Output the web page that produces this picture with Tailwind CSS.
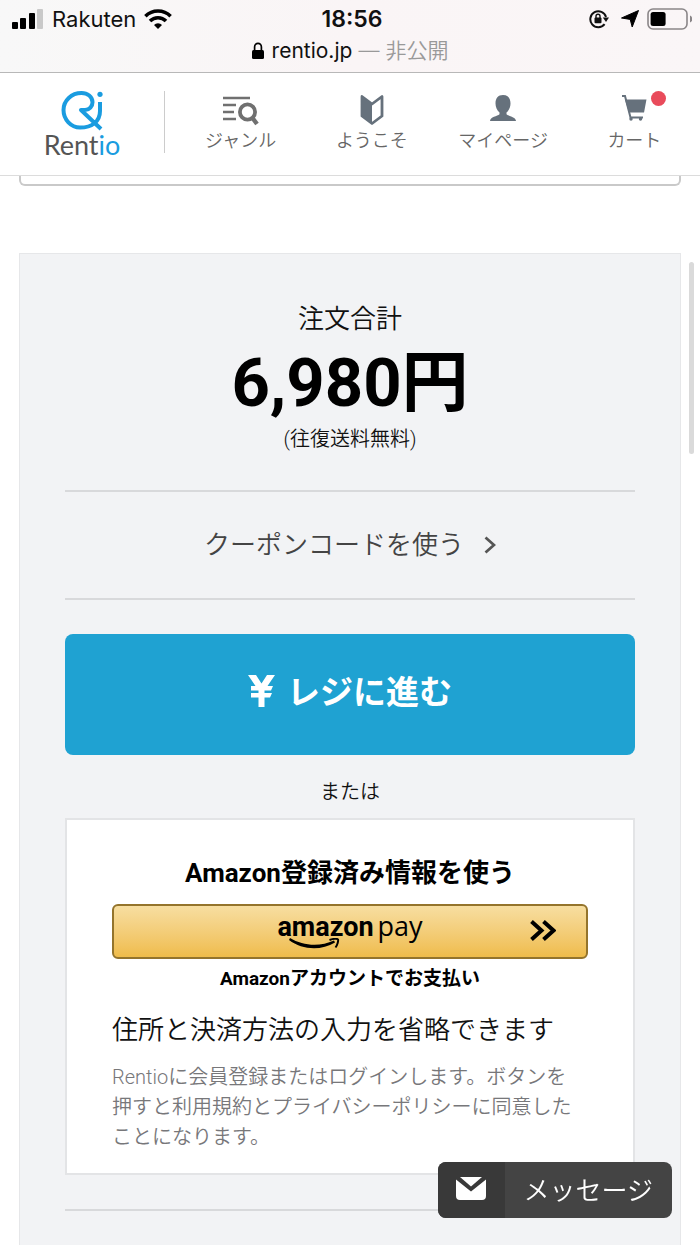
<!DOCTYPE html>
<html lang="ja">
<head>
<meta charset="utf-8">
<meta name="viewport" content="width=device-width, initial-scale=1">
<title>Rentio</title>
<script src="https://cdn.jsdelivr.net/npm/@tailwindcss/browser@4"></script>
</head>
<body class="relative flex min-h-screen flex-col bg-white font-['Roboto','Noto_Sans_CJK_JP',sans-serif] text-[#111]">

<!-- Device status bar -->
<div class="border-b border-[#b8b8b8] bg-linear-to-r from-[#f8f8f8] via-[#faf5f6] to-[#faf6f7] font-['Inter','Noto_Sans_CJK_JP',sans-serif] text-[22px] leading-8">
  <div class="grid h-9 grid-cols-3 items-center pt-0.5 pr-2 pl-3">
    <div class="flex items-center gap-2">
      <svg class="h-5 w-8" viewBox="0 0 32 20" aria-hidden="true">
        <rect x="0" y="13" width="6" height="7" rx="1"/><rect x="8" y="9" width="6" height="11" rx="1"/><rect x="17" y="4" width="6" height="16" rx="1"/><rect x="25" y="0" width="6" height="20" rx="1" fill="#c9c9c9"/>
      </svg>
      <span>Rakuten</span>
      <svg class="h-5 w-7" viewBox="0 0 28 20" fill="none" stroke="#000" stroke-width="3.6" aria-hidden="true">
        <path d="M1.4 7.2a18 18 0 0 1 25.2 0M6 12a11.4 11.4 0 0 1 16 0"/><path d="M14 20l-4-4a5.6 5.6 0 0 1 8 0z" fill="#000" stroke="none"/>
      </svg>
    </div>
    <div class="text-center text-[23px] font-semibold">18:56</div>
    <div class="flex items-center justify-end gap-2">
      <svg class="h-5 w-5" viewBox="0 0 20 20" fill="none" stroke="#111" stroke-width="2" aria-hidden="true">
        <path d="M15.6 15.2A8 8 0 1 1 17 8"/><path d="M13.8 8.500h6.200l-3 4.400z" fill="#111" stroke="none"/><rect x="5.500" y="8.600" width="7" height="5.600" rx="1" fill="#111" stroke="none"/><path d="M7 9V7.200a2 2 0 0 1 4 0V9" stroke-width="1.400"/>
      </svg>
      <svg class="ml-1 h-[18px] w-[18px]" viewBox="0 0 18 18" aria-hidden="true"><path d="M17.500.500L11.200 17 9.200 9.400.500 8z" stroke="#000" stroke-linejoin="round"/></svg>
      <svg class="h-[22px] w-[45px]" viewBox="0 0 45 22" aria-hidden="true">
        <rect x="1" y="1" width="39" height="20" rx="5" fill="none" stroke="#8a8688" stroke-width="1.600"/><rect x="3.600" y="4" width="15" height="14" rx="2.500"/><path d="M43 7.600v6.800a3.600 3.600 0 0 0 0-6.800z" fill="#8a8688"/>
      </svg>
    </div>
  </div>
  <div class="flex h-9 items-start justify-center gap-2 leading-7">
    <svg class="mt-1.5 h-[18px] w-3" viewBox="0 0 12 18" aria-hidden="true"><rect y="8" width="12" height="9" rx="1.500"/><path d="M2.600 9V5a3.400 3.600 0 0 1 6.800 0v4" fill="none" stroke="#000" stroke-width="1.700"/></svg>
    <span class="text-[#111]"><span class="text-[21px]">rentio.jp</span> <span class="text-[21px] font-[350] text-[#999]">— 非公開</span></span>
  </div>
</div>

<!-- Site header -->
<header class="flex h-[103px] items-start border-b border-[#dcdcdc] bg-white pt-[18px] text-lg leading-6 font-[350] text-[#666]">
  <a href="#" class="flex w-[164px] flex-col items-center font-['Lato',sans-serif] text-[27px] leading-7 font-normal text-[#555] [font-variant-ligatures:none]">
    <svg class="h-10 w-[42px]" viewBox="0 0 42 40" fill="none" stroke="#1a9ce0" stroke-width="4" stroke-linejoin="round" aria-hidden="true">
      <path d="M40 38L20 19h4c4.500 0 7.500-3.500 7.500-7.700C31.500 5.500 26.500 2 20.500 2 10.500 2 2.500 9.500 2.500 19S10 36.500 19 36.500c12 0 20-6 20-16.500v-9"/><circle cx="39" cy="3.300" r="2.600" fill="#1a9ce0" stroke="none"/>
    </svg>
    <span>Rent<span class="text-[#1a9ce0]">io</span></span>
  </a>
  <nav class="flex flex-1 border-l border-[#ccc] pl-[10px]">
    <a href="#" class="mt-1 flex flex-1 flex-col items-center"><svg class="h-[34px] w-9" viewBox="0 0 36 34" fill="none" stroke="#707070" stroke-width="2.600" aria-hidden="true"><path d="M0 3h27M0 10h13M0 17h11M0 24h13"/><circle cx="24.500" cy="17" r="7.600" stroke-width="3.800"/><path d="M29.500 23l4.500 6" stroke-width="4.400"/></svg>ジャンル</a>
    <a href="#" class="mt-1 flex flex-1 flex-col items-center"><svg class="h-[34px] w-6" viewBox="0 0 24 34" aria-hidden="true"><path d="M2 1.500L12 9l10-7.500V21l-10 7.500L2 21z" fill="#fff" stroke="#66717c" stroke-width="2.800" stroke-linejoin="round"/><path d="M2 1.500L12 9v19.500L2 21z" fill="#66717c"/></svg>ようこそ</a>
    <a href="#" class="mt-1 flex flex-1 flex-col items-center"><svg class="h-[34px] w-7" viewBox="0 0 28 34" fill="#66717c" aria-hidden="true"><path d="M14 0c5 0 7.500 3.200 7.500 8.500 0 3.500-1.500 7-4 9v1.700c2 2 9.500 2.600 9.500 6.800H1c0-4.200 7.500-4.800 9.500-6.800v-1.700c-2.500-2-4-5.500-4-9C6.500 3.200 9 0 14 0z"/></svg>マイページ</a>
    <a href="#" class="relative mt-1 flex flex-1 flex-col items-center"><svg class="h-[34px] w-7" viewBox="0 0 28 34" aria-hidden="true"><path d="M2 1h3l5.500 21.500H23" fill="none" stroke="#66717c" stroke-width="2"/><path d="M5 4.500h21.500L24 17.500H9z" fill="#66717c"/><circle cx="11" cy="24" r="1.700" fill="#66717c"/><circle cx="20.500" cy="24" r="1.700" fill="#66717c"/></svg>カート<span class="absolute -top-1 left-1/2 ml-[17px] h-[15px] w-[15px] rounded-full bg-[#e94b5b]"></span></a>
  </nav>
</header>

<main class="flex flex-1 flex-col px-[19px]">
  <div class="h-[10px] rounded-b-md border-2 border-t-0 border-[#c9c9c9]"></div>

  <section class="mt-[67px] flex-1 border border-b-0 border-[#e6e7e9] bg-[#f2f3f5] px-[45px] pt-[45px] text-center font-[350]">
    <h1 class="text-[26px] leading-10">注文合計</h1>
    <p class="pt-1 text-[67px] leading-[80px] font-bold text-black">6,980円</p>
    <p class="text-xl leading-8">(往復送料無料)</p>

    <a href="#" class="mt-[35px] flex h-[110px] items-center justify-center gap-5 border-y-2 border-[#d8d9db] text-[26px] text-[#444]">クーポンコードを使う<svg class="h-[18px] w-3" viewBox="0 0 12 18" fill="none" stroke="#555" stroke-width="2.800" aria-hidden="true"><path d="M1.500 1.500L10 9l-8.500 7.500"/></svg></a>

    <button type="button" class="mt-[34px] flex h-[121px] w-full items-center justify-center gap-3 rounded-lg bg-[#1fa2d2] pb-1 text-[33px] font-bold text-white"><svg class="-mt-1 h-8 w-[27px]" viewBox="0 0 27 32" fill="#fff" aria-hidden="true"><path d="M0 0h8l5.500 8.500L19 0h8l-7.500 11H25l-2 4.500h-6.500V18H24l-2 4.500h-5.500V32h-6v-9.500H3V18h7.500v-2.500H3V11h4.500z"/></svg>レジに進む</button>

    <p class="mt-[21px] text-xl leading-8">または</p>

    <div class="mt-[10px] border-2 border-[#e3e4e6] bg-white px-[45px] pt-[33px] pb-[21px]">
      <h2 class="text-[26px] leading-10 font-bold text-black">Amazon登録済み情報を使う</h2>
      <button type="button" aria-label="Amazon Pay" class="relative mt-[11px] flex h-[55px] w-full justify-center rounded-md border-2 border-[#94742c] bg-linear-to-b from-[#f7dea0] to-[#efbc4a] text-black">
        <span class="relative flex items-baseline gap-1 leading-10">
          <span class="text-[27px] font-bold">amazon</span>
          <span class="font-['Open_Sans',sans-serif] text-[27px] font-normal">pay</span>
          <svg class="absolute top-8 left-3 h-3 w-[52px]" viewBox="0 0 52 12" aria-hidden="true"><path d="M1 0c13 8 30 9 44 2.500l1 2C32 13 13 12 0 2z"/><path d="M40.500 2c4-1.500 8-1.500 8.500-.500S48.500 7 46.500 9.500" fill="none" stroke="#000" stroke-width="2"/></svg>
        </span>
        <svg class="absolute top-3.5 right-[30px] h-[21px] w-[26px]" viewBox="0 0 26 21" fill="none" stroke="#000" stroke-width="4" aria-hidden="true"><path d="M1.500 1.500l10 9-10 9M13.500 1.500l10 9-10 9"/></svg>
      </button>
      <p class="mt-1 text-[19px] leading-8 font-bold text-black">Amazonアカウントでお支払い</p>
      <p class="mt-[15px] text-left text-[26px] leading-10">住所と決済方法の入力を省略できます</p>
      <p class="mt-3 text-left text-xl leading-[30px] text-[#77777a]">Rentioに会員登録またはログインします。ボタンを<br>押すと利用規約とプライバシーポリシーに同意した<br>ことになります。</p>
    </div>
    <hr class="mt-[34px] border-t-2 border-[#d8d9db]">
  </section>
</main>

<!-- Scroll indicator -->
<div class="absolute top-[262px] right-[6px] h-48 w-[5px] rounded-full bg-[#dadada]"></div>

<!-- Floating message button -->
<button type="button" class="fixed right-7 bottom-[27px] flex h-14 items-stretch overflow-hidden rounded-lg bg-[#444] text-[26px] font-[350] text-white">
  <span class="flex w-[67px] items-center justify-center bg-[#393939] pb-1"><svg class="h-[23px] w-[30px]" viewBox="0 0 30 23" fill="#fff" aria-hidden="true"><path d="M4 0h22L15 9.500z"/><path d="M0 2.500L15 14.500 30 2.500V19a4 4 0 0 1-4 4H4a4 4 0 0 1-4-4z"/></svg></span>
  <span class="flex items-center px-[19px] pt-0.5">メッセージ</span>
</button>
</body>
</html>
